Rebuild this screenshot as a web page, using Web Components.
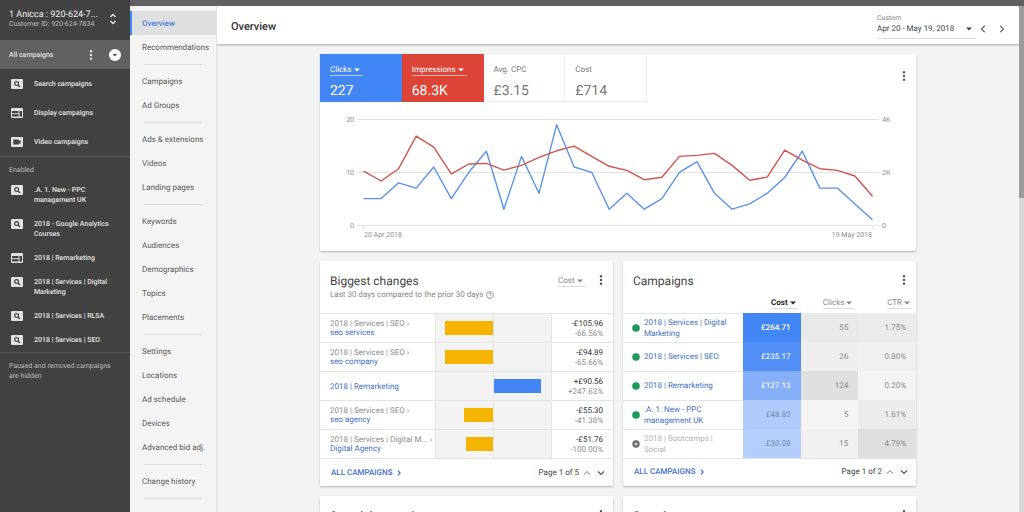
<!DOCTYPE html>
<html lang="en">
<head>
<meta charset="utf-8">
<meta name="viewport" content="width=device-width, initial-scale=1">
<title>Overview</title>
<style>
  html, body { margin: 0; height: 100%; }
  body { font: 8px/10px Roboto, "Liberation Sans", sans-serif; color: #5a5a5a; background: #f3f3f3; overflow: hidden; text-rendering: geometricPrecision; }
</style>
</head>
<body>
<ads-app></ads-app>
<script>
const BASE = `
  *, *::before, *::after { box-sizing: border-box; }
  a { color: inherit; text-decoration: none; }
  button, select { font: inherit; color: inherit; background: none; border: 0; padding: 0; margin: 0; cursor: pointer; text-rendering: inherit; }
  h1, h2, p, ul { margin: 0; padding: 0; font-weight: inherit; font-size: inherit; }
  ul { list-style: none; }
`;

class Base extends HTMLElement {
  connectedCallback() {
    if (this.shadowRoot) return;
    const root = this.attachShadow({ mode: 'open' });
    root.innerHTML = `<style>${BASE}${this.css()}</style>${this.html()}`;
  }
  css() { return ':host{display:block}'; }
  html() { return '<slot></slot>'; }
}

const ICONS = {
  search: [12, 10, '<rect width="12" height="10" rx="1.200" fill="currentColor"/><circle cx="5.600" cy="4.600" r="1.900" fill="none" stroke="#424242" stroke-width="1.200"/><path d="M7 6l2 2" stroke="#424242" stroke-width="1.300"/>'],
  display: [12, 10, '<rect width="12" height="10" rx="1.200" fill="currentColor"/><path fill="#424242" d="M1 3h6.500v2.300H1zM1 6.200h6.500v2.300H1zM8.500 3H11v5.500H8.500z"/>'],
  video: [12, 10, '<rect width="12" height="10" rx="1.200" fill="currentColor"/><path fill="#424242" d="M2.800 2.500h4.600q.5 0 .5.500v1.200l1.700-1.500v4.600L7.900 5.800V7q0 .5-.5.500H2.800q-.5 0-.5-.5V3q0-.5.5-.5z"/>'],
  kebab: [4, 12, '<g fill="currentColor"><circle cx="2" cy="2.200" r="1.200"/><circle cx="2" cy="6" r="1.200"/><circle cx="2" cy="9.800" r="1.200"/></g>'],
  unfold: [8, 12, '<path fill="none" stroke="currentColor" stroke-width="1.500" d="M1.500 4L4 1.500 6.500 4M1.500 8L4 10.500 6.500 8"/>'],
  circledown: [12, 12, '<circle cx="6" cy="6" r="6" fill="#fff"/><path fill="#424242" d="M3.800 5h4.400L6 7.200z"/>'],
  triangle: [6, 4, '<path fill="currentColor" d="M0 .4h6L3 3.600z"/>'],
  left: [6, 8, '<path fill="none" stroke="currentColor" stroke-width="1.200" d="M4.800.8L1.500 4l3.300 3.200"/>'],
  right: [6, 8, '<path fill="none" stroke="currentColor" stroke-width="1.200" d="M1.200.8L4.500 4 1.200 7.200"/>'],
  next: [4, 6, '<path fill="none" stroke="currentColor" stroke-width="1.200" d="M.8.600L3.200 3 .8 5.400"/>'],
  up: [8, 6, '<path fill="none" stroke="currentColor" stroke-width="1.200" d="M1 4.500L4 1.500l3 3"/>'],
  down: [8, 6, '<path fill="none" stroke="currentColor" stroke-width="1.200" d="M1 1.500l3 3 3-3"/>'],
  help: [8, 8, '<circle cx="4" cy="4" r="3.500" fill="none" stroke="currentColor" stroke-width=".8"/><path fill="none" stroke="currentColor" stroke-width=".8" d="M2.800 3.300q0-1.200 1.200-1.200t1.200 1q0 .5-.6.900T4 5"/><circle cx="4" cy="6" r=".5" fill="currentColor"/>'],
  enabled: [8, 8, '<circle cx="4" cy="4" r="3.800" fill="#1a9c5b"/>'],
  ended: [8, 8, '<circle cx="4" cy="4" r="3.700" fill="#6a6a6a"/><rect x="2.700" y="2.700" width="2.600" height="2.600" rx=".6" fill="#d8d8d8"/>'],
};

customElements.define('ui-icon', class extends Base {
  css() { return ':host{display:inline-flex;flex:none} svg{display:block}'; }
  html() {
    const [w, h, body] = ICONS[this.getAttribute('name')];
    return `<svg width="${w}" height="${h}" viewBox="0 0 ${w} ${h}" aria-hidden="true">${body}</svg>`;
  }
});

customElements.define('icon-button', class extends Base {
  css() { return ':host{display:inline-flex;flex:none} button{display:flex;align-items:center;justify-content:center;min-width:8px}'; }
  html() { return `<button type="button" aria-label="${this.getAttribute('label')}"><ui-icon name="${this.getAttribute('icon')}"></ui-icon></button>`; }
});

customElements.define('drop-down', class extends Base {
  css() {
    return `:host{display:inline-flex}
    .box{display:inline-flex;align-items:center;gap:2px;padding-right:3px;border-bottom:1px solid var(--line,#dcdcdc)}
    select{appearance:none;height:10px;line-height:10px;outline:0}
    ui-icon{pointer-events:none}`;
  }
  html() {
    const v = this.getAttribute('value');
    return `<span class="box"><select aria-label="${this.getAttribute('label')}"><option>${v}</option></select><ui-icon name="triangle"></ui-icon></span>`;
  }
});

customElements.define('account-sidebar', class extends Base {
  css() {
    return `:host{display:block;background:#424242;color:#e2e2e2;font-size:7px;font-weight:500}
    .account{height:40px;padding:0 13px 2px 9px;display:flex;align-items:center;justify-content:space-between}
    .account p{color:#bdbdbd;font-weight:400;line-height:9px}
    .account .name{color:#eee;font-size:9px;line-height:10px;white-space:nowrap}
    .all{height:29px;background:#616161;display:flex;align-items:center;padding:0 9px}
    .all a{flex:1}
    .all icon-button:last-child{margin-left:14px}
    .types{border-bottom:1px solid #555}
    .types a{height:29px;display:flex;align-items:center}
    ui-icon{width:12px;margin:0 11px}
    .label{color:#bdbdbd;font-weight:400;padding:8px 9px 3px}
    .enabled{border-bottom:1px solid #555}
    .enabled a{display:flex;padding:7px 14px 7px 0}
    .note{color:#bdbdbd;font-weight:400;padding:8px 9px}`;
  }
  html() {
    const row = ([icon, text]) => `<li><a href="#"><ui-icon name="${icon}"></ui-icon><span>${text}</span></a></li>`;
    return `<div class="account"><div><p class="name">1 Anicca : 920-624-7...</p><p>Customer ID: 920-624-7834</p></div>
      <icon-button icon="unfold" label="Switch account"></icon-button></div>
    <div class="all"><a href="#">All campaigns</a><icon-button icon="kebab" label="More"></icon-button><icon-button icon="circledown" label="Filter campaigns"></icon-button></div>
    <ul class="types">${[['search', 'Search campaigns'], ['display', 'Display campaigns'], ['video', 'Video campaigns']].map(row).join('')}</ul>
    <p class="label">Enabled</p>
    <ul class="enabled">${[['search', '.A. 1. New - PPC<br>management UK'], ['search', '2018 - Google Analytics<br>Courses'], ['display', '2018 | Remarketing'], ['search', '2018 | Services | Digital<br>Marketing'], ['search', '2018 | Services | RLSA'], ['search', '2018 | Services | SEO']].map(row).join('')}</ul>
    <p class="note">Paused and removed campaigns are hidden</p>`;
  }
});

customElements.define('section-nav', class extends Base {
  css() {
    return `:host{display:block;background:#f4f4f4;border-right:1px solid #e0e0e0;padding-top:5px;overflow:hidden}
    a{display:block;height:24px;line-height:24px;padding:1px 0 0 12px;white-space:nowrap}
    a.on{background:#dfdfdf;border-left:2px solid #4285f4;padding-left:10px;color:#4a7fdc;font-weight:500}
    ul + ul::before, ul:last-child::after{content:"";display:block;height:1px;background:#dcdcdc;margin:5px 14px 4px}`;
  }
  html() {
    return '<nav>' + [['Overview', 'Recommendations'], ['Campaigns', 'Ad Groups'], ['Ads &amp; extensions', 'Videos', 'Landing pages'],
      ['Keywords', 'Audiences', 'Demographics', 'Topics', 'Placements'],
      ['Settings', 'Locations', 'Ad schedule', 'Devices', 'Advanced bid adj.'], ['Change history']]
      .map(g => `<ul>${g.map(t => `<li><a href="#"${t === 'Overview' ? ' class="on" aria-current="page"' : ''}>${t}</a></li>`).join('')}</ul>`).join('') + '</nav>';
  }
});

customElements.define('page-header', class extends Base {
  css() {
    return `:host{display:flex;align-items:center;box-sizing:border-box;height:39px;padding:3px 13px 0 14px;background:#fff;border-bottom:1px solid #c4c4c4;box-shadow:0 1px 1px #0002}
    h1{flex:1;font-size:11px;line-height:14px;font-weight:500;color:#333}
    .date{width:99px;border-bottom:1px solid #dedede;color:#888;padding-bottom:3px}
    .date span{display:block;font-size:7px;line-height:9px}
    .date button{width:100%;display:flex;justify-content:space-between;align-items:center;color:#444;font-weight:400;line-height:12px;padding-right:4px}
    .steps{display:flex;gap:11px;margin-left:3px;padding-top:4px;color:#666}`;
  }
  html() {
    return `<h1>Overview</h1>
    <div class="date"><span id="range">Custom</span><button type="button" aria-describedby="range">Apr 20 - May 19, 2018<ui-icon name="triangle"></ui-icon></button></div>
    <div class="steps"><icon-button icon="left" label="Previous period"></icon-button><icon-button icon="right" label="Next period"></icon-button></div>`;
  }
});

customElements.define('metric-tile', class extends Base {
  css() {
    return `:host{display:block;box-sizing:border-box;height:48px;padding:11px 10px 0;border:solid #ececec;border-width:0 1px 1px 0;color:#777}
    :host([tone]){color:#fff;--line:#fff9;border-color:transparent}
    :host([tone=blue]){background:#4285f4 border-box} :host([tone=red]){background:#db4437 border-box}
    .label{height:14px;line-height:10px}
    .value{font-size:14px;line-height:16px;margin-top:4px;font-weight:400}`;
  }
  html() {
    const n = this.getAttribute('name');
    return `<div class="label">${this.hasAttribute('tone') ? `<drop-down label="Metric" value="${n}"></drop-down>` : n}</div><div class="value"><slot></slot></div>`;
  }
});

customElements.define('trend-chart', class extends Base {
  css() {
    return `:host{display:block} svg{display:block;width:100%;height:auto}
    text{font-size:7px;fill:#8c8c8c} .grid{stroke:#e2e2e2;fill:none} polyline{fill:none;stroke-width:1.400;stroke-linejoin:round}`;
  }
  html() {
    const clicks = [5,5,8,7,11,5,10,14,3,13,6,19,11,10,3,6,3,5,10,12,6,3,4,6,9,14,7,7,4,1];
    const impressions = [2045,1667,2133,3371,2955,1943,2311,2337,2083,2261,2564,2814,2992,2602,2224,2072,1716,1807,2602,2640,2716,2261,1693,1818,2841,2462,2133,2072,1856,1087];
    const line = (data, max) => data.map((v, i) => `${(43.5 + i * 509 / 29).toFixed(1)},${(123 - v / max * 105.500).toFixed(1)}`).join(' ');
    return `<svg viewBox="0 0 596 149" role="img" aria-label="Clicks and impressions by day">
      <path class="grid" d="M37 17.500H559M37 70.500H559M37 123.500H559M43.500 123v4M552.500 123v4"/>
      <polyline stroke="#5b93e8" points="${line(clicks, 20)}"/><polyline stroke="#d0564c" points="${line(impressions, 4000)}"/>
      <g text-anchor="end"><text x="34" y="20">20</text><text x="34" y="73">10</text><text x="34" y="126">0</text><text x="552" y="135">19 May 2018</text></g>
      <text x="562" y="20">4K</text><text x="562" y="73">2K</text><text x="562" y="126">0</text><text x="44" y="135">20 Apr 2018</text></svg>`;
  }
});

customElements.define('data-card', class extends Base {
  css() {
    return `:host{display:flex;flex-direction:column;background:#fff;box-shadow:0 1px 2px #0004;border-radius:1px;min-width:0}
    header{display:flex;align-items:flex-start;padding:13px 8px 0 10px;height:32px;color:#444}
    h2{font-size:12px;line-height:14px;flex:1;display:flex;align-items:center;gap:4px}
    icon-button{height:12px;margin-left:11px;color:#555}
    footer{display:flex;align-items:center;height:27px;padding:0 8px 0 11px;color:#444}
    footer a{flex:1;color:#3f72c6;font-weight:500;display:flex;align-items:center;gap:4px}
    footer icon-button{height:auto;margin-left:4px} footer icon-button + icon-button{margin-left:6px}
    .off{color:#aaa}`;
  }
  html() {
    const pages = this.getAttribute('pages');
    return `<header><h2>${this.getAttribute('heading')}${this.hasAttribute('help') ? '<ui-icon name="help"></ui-icon>' : ''}</h2><slot name="tools"></slot><icon-button icon="kebab" label="Card options"></icon-button></header>
    <slot></slot>${pages ? `<footer><a href="#">ALL CAMPAIGNS<ui-icon name="next"></ui-icon></a><span>Page 1 of ${pages}</span><icon-button class="off" icon="up" label="Previous page"></icon-button><icon-button icon="down" label="Next page"></icon-button></footer>` : ''}`;
  }
});

customElements.define('changes-table', class extends Base {
  css() {
    return `:host{display:block}
    .sub{display:flex;align-items:flex-start;gap:2px;height:22px;margin-top:-2px;padding-left:10px;line-height:8px;color:#888}
    table{width:100%;border-collapse:collapse;table-layout:fixed;border-bottom:1px solid #e4e4e4}
    td{height:29px;padding:0;border-top:1px solid #e4e4e4;line-height:9px;color:#8e8e8e;white-space:nowrap}
    td:first-child{padding-left:10px} td a{color:#3f72c6}
    .track{background:#f3f3f3;border-left:1px solid #e6e6e6;border-right:1px solid #e6e6e6}
    .halves{display:grid;grid-template-columns:1fr 1fr;height:28px;align-items:center}
    .halves div{height:28px;display:flex;align-items:center;justify-content:flex-end}
    .halves div + div{justify-content:flex-start;border-left:1px solid #e6e6e6}
    i{display:block;height:14px;background:#f4b400} .up i{background:#4285f4}
    td:last-child{text-align:right;padding-right:10px} b{display:block;font-weight:400;color:#333;line-height:10px}
    .name{width:115px} .bar{width:116px}`;
  }
  html() {
    const rows = [['2018 | Services | SEO ›', 'seo services', -83, '-£105.96', '-66.56%'], ['2018 | Services | SEO ›', 'seo company', -83, '-£94.89', '-65.66%'],
      ['', '2018 | Remarketing', 83, '+£90.56', '+247.63%'], ['2018 | Services | SEO ›', 'seo agency', -50, '-£55.30', '-41.38%'],
      ['2018 | Services | Digital M... ›', 'Digital Agency', -47, '-£51.76', '-100.00%']];
    return `<p class="sub">Last 30 days compared to the prior 30 days <ui-icon name="help"></ui-icon></p>
    <table aria-label="Biggest changes"><colgroup><col class="name"><col class="bar"><col></colgroup><tbody>${rows.map(([p, n, w, v, c]) => {
      const bar = `<i style="width:${Math.abs(w)}%"></i>`;
      return `<tr><td>${p ? p + '<br>' : ''}<a href="#">${n}</a></td><td class="track"><div class="halves"><div>${w < 0 ? bar : ''}</div><div class="up">${w > 0 ? bar : ''}</div></div></td><td><b>${v}</b>${c}</td></tr>`;
    }).join('')}</tbody></table>`;
  }
});

customElements.define('campaigns-table', class extends Base {
  css() {
    return `:host{display:block}
    table{width:100%;border-collapse:collapse;table-layout:fixed;border-bottom:1px solid #e4e4e4}
    th, thead td{height:20px;padding:0 4px 0 0;text-align:right;font-weight:400;color:#888;vertical-align:top}
    th button{display:inline-flex;align-items:center;gap:2px;line-height:10px;padding:5px 2px 0 0;border-bottom:1px solid #dcdcdc}
    th[aria-sort] button{color:#222;font-weight:700} th[aria-sort]{padding-right:3px}
    tbody td{height:29px;padding:0 10px 0 0;text-align:right;color:#8a8a8a;line-height:11px}
    tbody .n{text-align:left;padding-left:9px;padding-right:0;border-top:1px solid #e4e4e4}
    .n div{display:flex;align-items:center;gap:4px} .n a{color:#3f72c6} .ended a{color:#b4b4b4}
    .name{width:120px}`;
  }
  html() {
    const rows = [['2018 | Services | Digital<br>Marketing', '£264.71', '55', '1.75%', '#4285f4', '#fff', '#e9e9e9', '#ebebeb'],
      ['2018 | Services | SEO', '£235.17', '26', '0.80%', '#518ef5', '#e8f0ff', '#efefef', '#f0f0f0'],
      ['2018 | Remarketing', '£127.13', '124', '0.20%', '#86affa', '#e8f0ff', '#dedfdf', '#f4f4f4'],
      ['.A. 1. New - PPC<br>management UK', '£48.82', '5', '1.61%', '#b0cbfb', '#7187ab', '#f4f4f4', '#ececec'],
      ['2018 | Bootcamps |<br>Social', '£30.08', '15', '4.79%', '#b5cefb', '#7187ab', '#f1f1f1', '#dedfdf']];
    const head = (t, s) => `<th scope="col"${s ? ' aria-sort="descending"' : ''}><button type="button">${t}<ui-icon name="triangle"></ui-icon></button></th>`;
    return `<table aria-label="Campaigns"><colgroup><col class="name"><col><col><col></colgroup><thead><tr><td></td>${head('Cost', 1)}${head('Clicks')}${head('CTR')}</tr></thead>
    <tbody>${rows.map(([n, a, b, c, bg, fg, g1, g2], i) => `<tr><td class="n${i === 4 ? ' ended' : ''}"><div><ui-icon name="${i === 4 ? 'ended' : 'enabled'}"></ui-icon><a href="#">${n}</a></div></td>
      <td style="background:${bg};color:${fg};font-weight:${i < 3 ? 500 : 400}">${a}</td><td style="background:${g1}">${b}</td><td style="background:${g2}">${c}</td></tr>`).join('')}</tbody></table>`;
  }
});

customElements.define('ads-app', class extends Base {
  css() {
    return `:host{display:grid;grid-template-columns:130px minmax(0,1fr);height:100vh;overflow:hidden}
    .right{display:grid;grid-template-columns:87px minmax(0,1fr) 5px;grid-template-rows:6px minmax(0,1fr);min-height:0}
    .strip{grid-column:1/-1;background:#606060}
    main{overflow:hidden;background:#f3f3f3}
    .content{max-width:596px;margin:9px auto 0;display:grid;grid-template-columns:1fr 1fr;gap:10px;align-items:start}
    data-card{min-height:60px}
    .trend{grid-column:1/-1;background:#fff;box-shadow:0 1px 2px #0004;border-radius:1px}
    .top{display:flex;justify-content:space-between}
    .tiles{display:grid;grid-template-columns:repeat(4,1fr);width:327px}
    .top > icon-button{height:12px;margin:16px 8px 0;color:#555}
    .rail{background:#d8d9d9} .rail div{height:38%;background:#9c9c9c}
    data-card drop-down{color:#888;padding-top:2px}`;
  }
  html() {
    return `<account-sidebar></account-sidebar>
    <div class="right"><div class="strip"></div><section-nav></section-nav>
      <main><page-header></page-header>
        <div class="content">
          <section class="trend"><div class="top"><div class="tiles"><metric-tile tone="blue" name="Clicks">227</metric-tile><metric-tile tone="red" name="Impressions">68.3K</metric-tile><metric-tile name="Avg. CPC">£3.15</metric-tile><metric-tile name="Cost">£714</metric-tile></div>
            <icon-button icon="kebab" label="Chart options"></icon-button></div><trend-chart></trend-chart></section>
          <data-card heading="Biggest changes" pages="5"><drop-down slot="tools" label="Compare by" value="Cost"></drop-down><changes-table></changes-table></data-card>
          <data-card heading="Campaigns" pages="2"><campaigns-table></campaigns-table></data-card>
          <data-card heading="Search keywords"></data-card>
          <data-card heading="Searches" help></data-card>
        </div></main>
      <div class="rail"><div></div></div></div>`;
  }
});
</script>
</body>
</html>
